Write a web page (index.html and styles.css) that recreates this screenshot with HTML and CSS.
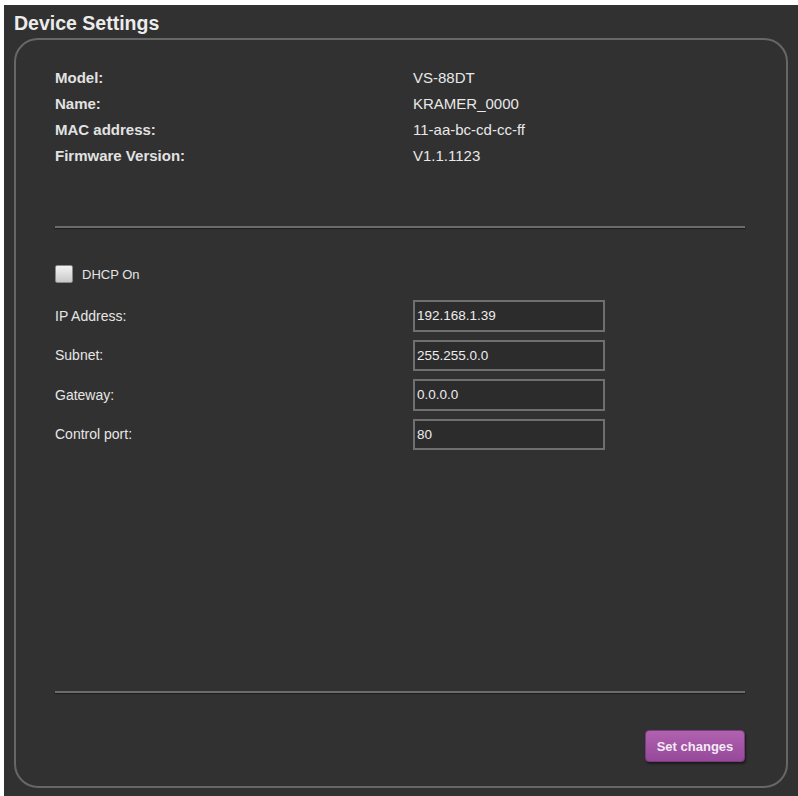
FILE: index.html
```html
<!DOCTYPE html>
<html lang="en">
  <head>
    <meta charset="UTF-8" />
    <meta name="viewport" content="width=device-width, initial-scale=1.0" />
    <title>Device Settings</title>
    <link rel="stylesheet" href="styles.css">
  </head>
  <body>
    <div class="screen">
      <h1 class="title">Device Settings</h1>

      <div class="panel">
        <div class="info">
          <span class="info-label">Model:</span><span class="info-value">VS-88DT</span>
          <span class="info-label">Name:</span><span class="info-value">KRAMER_0000</span>
          <span class="info-label">MAC address:</span><span class="info-value">11-aa-bc-cd-cc-ff</span>
          <span class="info-label">Firmware Version:</span><span class="info-value">V1.1.1123</span>
        </div>

        <hr class="divider divider-top" />

        <label class="dhcp">
          <input type="checkbox" id="dhcp" />
          <span>DHCP On</span>
        </label>

        <div class="network">
          <label class="field-label" for="ip">IP Address:</label>
          <input class="field" id="ip" type="text" value="192.168.1.39" />

          <label class="field-label" for="subnet">Subnet:</label>
          <input class="field" id="subnet" type="text" value="255.255.0.0" />

          <label class="field-label" for="gateway">Gateway:</label>
          <input class="field" id="gateway" type="text" value="0.0.0.0" />

          <label class="field-label" for="port">Control port:</label>
          <input class="field" id="port" type="text" value="80" />
        </div>

        <hr class="divider divider-bottom" />

        <div class="actions">
          <button class="btn-set">Set changes</button>
        </div>
      </div>
    </div>
  </body>
</html>
```

FILE: styles.css
```css
body {
  margin: 0;
  background: #fff;
  font-family: "Liberation Sans", Arial, sans-serif;
  color: #e4e4e4;
}
.screen {
  margin: 5px 0 0 4px;
  height: 791px;
  padding: 0 10px 8px 10px;
  box-sizing: border-box;
  background: #313131;
  display: flex;
  flex-direction: column;
}
.title {
  margin: 0;
  height: 33px;
  padding-top: 3px;
  box-sizing: border-box;
  line-height: 30px;
  font-size: 19.5px;
  font-weight: bold;
  color: #ececec;
}
.panel {
  flex: 1;
  border: 2px solid #676767;
  border-radius: 24px;
  padding: 24px 41px 24px 39px;
  display: flex;
  flex-direction: column;
}
.info {
  display: grid;
  grid-template-columns: 358px 1fr;
  grid-auto-rows: 26px;
  align-items: center;
  font-size: 15px;
}
.info-label {
  font-weight: bold;
  color: #e2e2e2;
}
.info-value {
  color: #e8e8e8;
}
.divider {
  width: 100%;
  height: 2px;
  margin: 0;
  border: none;
  background: #6c6c6c;
  box-shadow: 0 1px 1px #1e1e1e;
}
.divider-top {
  margin-top: 58px;
}
.dhcp {
  display: flex;
  align-items: center;
  gap: 9px;
  height: 18px;
  margin-top: 37px;
  font-size: 13px;
  color: #e4e4e4;
}
.dhcp input {
  appearance: none;
  margin: 0;
  width: 18px;
  height: 18px;
  border: 1px solid #8a8a8a;
  border-radius: 2px;
  background: linear-gradient(#f2f2f2, #c9c9c9);
}
.network {
  margin-top: 17px;
  display: grid;
  grid-template-columns: 358px 192px;
  grid-auto-rows: 31.5px;
  row-gap: 8px;
  align-items: center;
}
.field-label {
  font-size: 14px;
  color: #e6e6e6;
}
.field {
  height: 31.5px;
  box-sizing: border-box;
  border: 2px solid #6f6f6f;
  background: #2c2c2c;
  color: #ececec;
  font-family: "Liberation Sans", Arial, sans-serif;
  font-size: 13.5px;
  padding: 0 2px;
  outline: none;
}
.divider-bottom {
  margin-top: auto;
}
.actions {
  display: flex;
  justify-content: flex-end;
  margin-top: 37px;
}
.btn-set {
  width: 100px;
  height: 32px;
  border: 1px solid #7a3a7c;
  border-radius: 4px;
  background: linear-gradient(#b062b0, #96489a);
  box-shadow: 1px 2px 2px #1c1c1c;
  color: #f4eaf4;
  font-family: "Liberation Sans", Arial, sans-serif;
  font-size: 13px;
  font-weight: bold;
  cursor: pointer;
}
```
